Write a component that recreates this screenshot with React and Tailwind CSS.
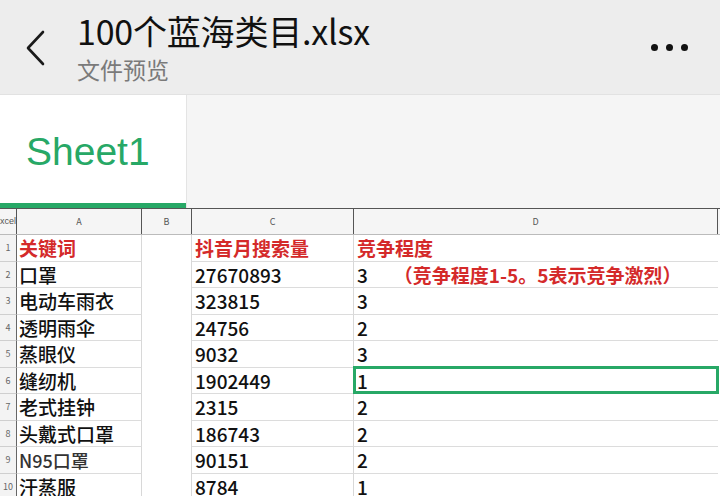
import React from 'react';

const rows = [
  { a: '关键词', c: '抖音月搜索量', d: '竞争程度', head: true },
  { a: '口罩', c: '27670893', d: '3', note: '（竞争程度1-5。5表示竞争激烈）' },
  { a: '电动车雨衣', c: '323815', d: '3' },
  { a: '透明雨伞', c: '24756', d: '2' },
  { a: '蒸眼仪', c: '9032', d: '3' },
  { a: '缝纫机', c: '1902449', d: '1', selected: true },
  { a: '老式挂钟', c: '2315', d: '2' },
  { a: '头戴式口罩', c: '186743', d: '2' },
  { a: 'N95口罩', c: '90151', d: '2', light: true },
  { a: '汗蒸服', c: '8784', d: '1' },
];

const cjk = { fontFamily: '"Noto Sans CJK SC", "Liberation Sans", sans-serif' };

const App = () => {
  return (
    <div className="w-[720px] h-[496px] overflow-hidden bg-white" style={cjk}>
      {/* 顶部标题栏 */}
      <div className="h-[95px] bg-[#ededed] flex items-start relative border-b border-[#e2e2e2]">
        <svg className="ml-[24px] mt-[30px]" width="22" height="36" viewBox="0 0 22 36">
          <path d="M19 2 L4 18 L19 34" fill="none" stroke="#1a1a1a" strokeWidth="2.6" strokeLinecap="round" strokeLinejoin="round" />
        </svg>
        <div className="ml-[31px] flex flex-col">
          <div className="text-[34px] leading-[34px] mt-[14px] text-[#111] tracking-[-0.2px]">100个蓝海类目.xlsx</div>
          <div className="text-[23px] leading-[26px] mt-[8px] text-[#7a7a7a]">文件预览</div>
        </div>
        <div className="ml-auto mr-[32px] mt-[44px] flex gap-[8px]">
          <span className="w-[7px] h-[7px] rounded-full bg-[#111]" />
          <span className="w-[7px] h-[7px] rounded-full bg-[#111]" />
          <span className="w-[7px] h-[7px] rounded-full bg-[#111]" />
        </div>
      </div>

      {/* 工作表标签 */}
      <div className="h-[113px] flex">
        <div className="w-[186px] bg-white border-b-[5px] border-[#27a866] flex items-center pl-[26px] pt-[6px]">
          <span className="text-[39px] text-[#27a866]" style={{ fontFamily: '"Liberation Sans", sans-serif' }}>Sheet1</span>
        </div>
        <div className="flex-1 bg-[#f5f5f5] border-l border-[#e4e4e4]" />
      </div>

      {/* 表格 */}
      <div className="grid grid-cols-[17px_125px_50px_162px_364px] h-[27px] bg-[#f5f5f5] border-t border-[#555] border-b border-b-[#bbb] text-[9px] text-[#555]">
        <div className="border-r border-[#555] flex items-center justify-end overflow-hidden whitespace-nowrap" style={{ fontFamily: '"Liberation Sans", sans-serif' }}>Excel</div>
        <div className="border-r border-[#555] flex items-center justify-center">A</div>
        <div className="border-r border-[#555] flex items-center justify-center">B</div>
        <div className="border-r border-[#555] flex items-center justify-center">C</div>
        <div className="border-r border-[#555] flex items-center justify-center">D</div>
      </div>

      {rows.map((r, i) => (
        <div key={i} className="grid grid-cols-[17px_125px_50px_162px_364px] h-[26.5px] text-[19px] font-medium">
          <div className="bg-[#f3f3f3] border-r border-[#666] border-b border-b-[#cfcfcf] flex items-center justify-center text-[9px] text-[#666] font-normal">{i + 1}</div>
          <div className={`border-r border-[#d8d8d8] border-b border-b-[#dcdcdc] flex items-center pl-[2px] leading-none whitespace-nowrap ${r.head ? 'text-[#d42a2a] font-bold' : r.light ? 'text-[#333] text-[18px]' : 'text-[#111]'}`}>{r.a}</div>
          <div className="border-r border-[#d8d8d8]" />
          <div className={`border-r border-[#d8d8d8] border-b border-b-[#dcdcdc] flex items-center pl-[3px] leading-none ${r.head ? 'text-[#d42a2a] font-bold' : 'text-[#111]'}`}>{r.c}</div>
          <div className={`relative border-b border-b-[#dcdcdc] flex items-center pl-[3px] leading-none whitespace-nowrap ${r.head ? 'text-[#d42a2a] font-bold' : 'text-[#111]'}`}>
            {r.d}
            {r.note && <span className="ml-[26px] text-[#d42a2a] font-bold">{r.note}</span>}
            {r.selected && <div className="absolute -top-[2px] -left-[1px] -right-[1px] -bottom-[1px] border-[3px] border-[#27a866]" />}
          </div>
        </div>
      ))}
    </div>
  );
};

export default App;
